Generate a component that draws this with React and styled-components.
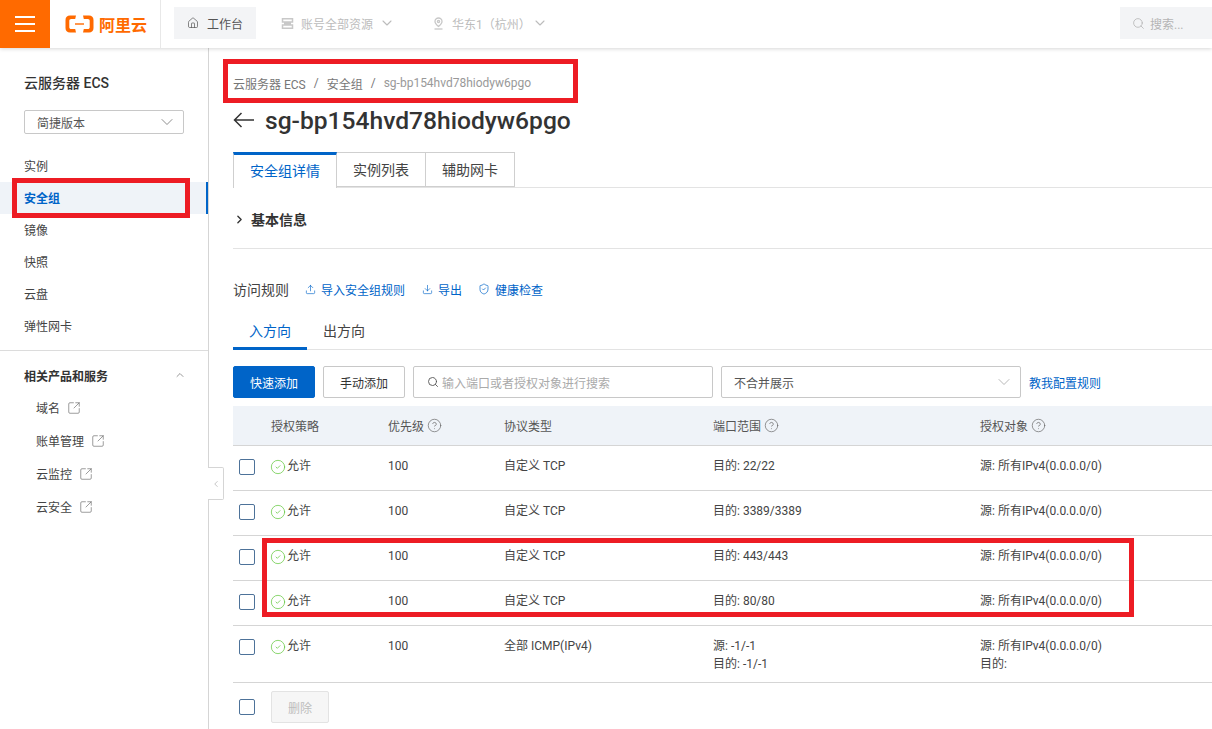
import React from 'react';
import styled, { createGlobalStyle } from 'styled-components';
import {
  ChevronDown, ChevronLeft, ChevronRight, ChevronUp, CircleCheck, CircleHelp,
  Download, House, Search, ShieldCheck, SquareArrowOutUpRight, Upload,
} from 'lucide-react';

const FONT = `Roboto, "Noto Sans CJK SC", sans-serif`;

const Global = createGlobalStyle`
  html, body { margin: 0; height: 100%; overflow: hidden; background: #fff; }
  body { font-family: ${FONT}; font-size: 12px; color: #333; }
  * { box-sizing: border-box; }
`;

/*──────── shells ─────*/
const Page = styled.div`
  display: flex; flex-direction: column;
  width: 1212px; height: 729px; overflow: hidden;
`;
const Body = styled.div`
  flex: 1; display: flex; min-height: 0;
`;

/* red annotation frame laid over the screenshot */
const Callout = styled.div`
  position: absolute;
  left: ${p => p.$left}px; top: ${p => p.$top}px;
  width: ${p => p.$w}px; height: ${p => p.$h}px;
  border: 5px solid #ed1c24;
  pointer-events: none;
  z-index: 5;
`;

/*──────── top bar ─────*/
const TopBar = styled.header`
  position: relative; z-index: 10;
  flex: 0 0 48px; display: flex; align-items: center;
  background: #fff;
  box-shadow: 0 1px 4px rgba(0, 0, 0, .16);
`;
const Burger = styled.button`
  flex: 0 0 50px; height: 48px; padding: 0 0 1px; border: 0;
  display: flex; flex-direction: column; justify-content: center; align-items: center; gap: 5px;
  background: #ff6a00;
  span { display: block; width: 20px; height: 2px; background: #fff; }
`;
const Logo = styled.div`
  flex: 0 0 111px; height: 48px;
  display: flex; align-items: center; gap: 5px;
  padding: 0 0 1px 15px;
  border-right: 1px solid #e8e8e8;
  color: #ff6a00; font-size: 16px; font-weight: 700;
`;
const WorkBtn = styled.div`
  display: flex; align-items: center; gap: 8px;
  width: 82px; height: 32px; margin: 0 0 2px 13px; padding-left: 13px;
  background: #f3f4f6; color: #555;
`;
const Scope = styled.div`
  display: flex; align-items: center;
  margin: 0 0 2px ${p => p.$ml}px;
  color: #bcbcbc;
  span { margin: 0 ${p => p.$gap}px 0 7px; }
`;
const TopSearch = styled.div`
  display: flex; align-items: center; gap: 5px;
  width: 92px; height: 32px; margin: 0 0 2px auto; padding-left: 12px;
  background: #f3f4f6; color: #b5b5b5;
`;

/*──────── side nav ─────*/
const Side = styled.aside`
  position: relative;
  flex: 0 0 209px;
  border-right: 1px solid #d5d5d5;
`;
const SideTitle = styled.div`
  margin: 25px 0 0 24px; height: 20px; line-height: 20px;
  font-size: 14px; font-weight: 500; color: #333;
`;
const VersionSelect = styled.div`
  display: flex; align-items: center; justify-content: space-between;
  width: 160px; height: 24px; margin: 17px 0 16px 24px; padding: 0 6px 0 12px;
  border: 1px solid #c8c8c8; border-radius: 2px; color: #555;
`;
const NavItem = styled.div`
  position: relative;
  height: 32px; line-height: 32px; padding: 1px 0 0 24px;
  color: ${p => (p.$active ? '#0064c8' : '#444')};
  font-weight: ${p => (p.$active ? 700 : 400)};
  background: ${p => (p.$active ? '#eff3f8' : 'transparent')};
  border-right: ${p => (p.$active ? '2px solid #0064c8' : '0')};
`;
const SideRule = styled.div`
  height: 1px; margin-top: 8px; background: #dcdcdc;
`;
const GroupHead = styled.div`
  display: flex; align-items: center; justify-content: space-between;
  height: 20px; margin-top: 14px; padding: 0 22px 0 24px;
  font-weight: 700; color: #333;
`;
const SubList = styled.div`
  margin-top: 6px;
`;
const SubItem = styled.div`
  display: flex; align-items: center; gap: 7px;
  height: 33px; padding-left: 36px; color: #444;
`;
const Handle = styled.div`
  position: absolute; left: 208px; top: 419px;
  display: flex; align-items: center; justify-content: center;
  width: 16px; height: 33px;
  background: #fff;
  border: 1px solid #d5d5d5; border-left: 0;
  border-radius: 0 2px 2px 0;
  color: #bbb;
`;

/*──────── main ─────*/
const Main = styled.main`
  flex: 1; min-width: 0; padding-left: 24px;
`;
const Crumbs = styled.nav`
  position: relative;
  display: flex; align-items: center; gap: 8px;
  height: 20px; margin-top: 25px;
  color: #777;
  em { font-style: normal; color: #999; }
`;
const TitleRow = styled.div`
  display: flex; align-items: center; gap: 11px;
  height: 36px; margin-top: 9px;
  color: #333; font-size: 24.6px; font-weight: 500;
`;
const Tabs = styled.div`
  display: flex;
  height: 36px; margin-top: 14px;
  border-bottom: 1px solid #e3e3e3;
`;
const Tab = styled.div`
  display: flex; align-items: center; justify-content: center;
  width: ${p => p.$w}px; height: ${p => (p.$active ? 36 : 35)}px;
  padding-bottom: ${p => (p.$active ? 3 : 1)}px;
  font-size: 14px;
  color: ${p => (p.$active ? '#0064c8' : '#444')};
  background: #fff;
  border: 1px solid #cfcfcf; border-left-width: ${p => (p.$first ? 1 : 0)}px;
  border-top: ${p => (p.$active ? '3px solid #0064c8' : '1px solid #cfcfcf')};
  border-bottom: ${p => (p.$active ? '0' : '1px solid #cfcfcf')};
`;
const Section = styled.div`
  display: flex; align-items: center; gap: 5px;
  height: 61px; padding-top: 2px;
  border-bottom: 1px solid #e3e3e3;
  font-size: 14px; font-weight: 700; color: #333;
`;
const RuleBar = styled.div`
  display: flex; align-items: center;
  height: 20px; margin-top: 30px;
  color: #444; font-size: 14px;
`;
const ActionLink = styled.a`
  display: flex; align-items: center; gap: 5px;
  margin-left: ${p => p.$ml}px;
  color: #0064c8; font-size: 12px;
`;
const DirTabs = styled.div`
  display: flex;
  height: 34px; margin-top: 17px;
  border-bottom: 1px solid #e3e3e3;
`;
const DirTab = styled.div`
  width: ${p => p.$w}px; height: 34px; line-height: 31px; text-align: center;
  font-size: 14px;
  color: ${p => (p.$active ? '#0064c8' : '#444')};
  border-bottom: ${p => (p.$active ? '3px solid #0064c8' : '0')};
`;
const Toolbar = styled.div`
  display: flex; align-items: center; gap: 8px;
  height: 32px; margin-top: 16px;
`;
const Btn = styled.button`
  width: 82px; height: 32px; padding: 0;
  font: 12px ${FONT};
  border-radius: 2px;
  color: ${p => (p.$primary ? '#fff' : '#333')};
  background: ${p => (p.$primary ? '#0064c8' : '#fff')};
  border: 1px solid ${p => (p.$primary ? '#0064c8' : '#c8c8c8')};
`;
const SearchBox = styled.div`
  display: flex; align-items: center; gap: 3px;
  width: 300px; height: 32px; padding-left: 13px;
  border: 1px solid #c8c8c8; border-radius: 2px;
  color: #aaa;
  svg { color: #555; }
`;
const MergeSelect = styled.div`
  display: flex; align-items: center; justify-content: space-between;
  width: 300px; height: 32px; padding: 0 6px 0 12px;
  border: 1px solid #c8c8c8; border-radius: 2px;
  color: #555;
  svg { color: #aaa; }
`;
const HelpLink = styled.a`
  color: #0064c8;
`;

/*──────── table ─────*/
const COLS = '38px 117px 116px 209px 267px 1fr';
const TableHead = styled.div`
  display: grid; grid-template-columns: ${COLS}; align-items: center;
  height: 40px; margin-top: 8px;
  background: #eff3f8;
  border-bottom: 1px solid #d5d5d5;
  color: #555;
`;
const HeadCell = styled.div`
  display: flex; align-items: center; gap: 3px;
  grid-column: ${p => p.$col};
  svg { color: #666; }
`;
const RowGroup = styled.div`
  position: relative;
`;
const Row = styled.div`
  display: grid; grid-template-columns: ${COLS}; align-items: start;
  height: ${p => p.$h || 45}px; padding-top: 11px;
  border-bottom: 1px solid #d5d5d5;
  line-height: 18px; color: #444;
`;
const Check = styled.span`
  display: block; width: 16px; height: 16px;
  margin: ${p => p.$mt ?? 2}px 0 0 6px;
  border: 1px solid #4d7299; border-radius: 2px;
  background: #fff;
`;
const Allow = styled.div`
  display: flex; align-items: center; gap: 1px;
  svg { color: #62c73c; margin: 2px 0 0 -1px; }
`;
const Footer = styled.div`
  display: flex; align-items: center; gap: 16px;
  height: 32px; margin-top: 8px;
`;
const DeleteBtn = styled.button`
  width: 58px; height: 32px; padding: 0;
  font: 12px ${FONT};
  color: #bdbdbd; background: #f6f6f6;
  border: 1px solid #e3e3e3; border-radius: 2px;
`;

/*──────── data ─────*/
const NAV = ['实例', '安全组', '镜像', '快照', '云盘', '弹性网卡'];
const SUB = ['域名', '账单管理', '云监控', '云安全'];
const HEAD = [
  ['授权策略', false], ['优先级', true], ['协议类型', false], ['端口范围', true], ['授权对象', true],
];
const SRC_ALL = '源: 所有IPv4(0.0.0.0/0)';

const LogoMark = () => (
  <svg width="29" height="18" viewBox="0 0 29 18" fill="#ff6a00">
    <path d="M11 0.500H5C2.200 0.500 0.500 2.200 0.500 5v8c0 2.800 1.700 4.500 4.500 4.500h6l-0.800-3.500H6.200C5 14 4.300 13.300 4.300 12.200V5.800C4.300 4.700 5 4 6.200 4h4z" />
    <path d="M18 0.500h6c2.800 0 4.500 1.700 4.500 4.500v8c0 2.800-1.700 4.500-4.500 4.500h-6l0.800-3.500h4c1.200 0 1.900-0.700 1.900-1.800V5.800c0-1.100-0.700-1.800-1.900-1.800h-4z" />
    <rect x="10" y="8.300" width="9" height="1.400" />
  </svg>
);

const AccountIcon = () => (
  <svg width="13" height="13" viewBox="0 0 13 13" fill="none" stroke="#c8c8c8" strokeWidth="1.500">
    <path d="M1.500 1.800h10v3.200h-10zM3 6.500h7M1.500 8h10v3.200h-10z" />
  </svg>
);

const PinIcon = () => (
  <svg width="13" height="13" viewBox="0 0 13 13" fill="none" stroke="#c8c8c8" strokeWidth="1.300">
    <path d="M6.500 9.500C4.500 7.800 3 6.300 3 4.500a3.500 3.500 0 0 1 7 0C10 6.300 8.500 7.800 6.500 9.500z" />
    <circle cx="6.500" cy="4.500" r="1.100" />
    <path d="M2.500 12h8" />
  </svg>
);

const BackArrow = () => (
  <svg width="21" height="16" viewBox="0 0 21 16" fill="none" stroke="#333" strokeWidth="1.500">
    <path d="M21 8H1.500M8.500 1l-7 7 7 7" />
  </svg>
);

function DataRow({ proto = '自定义 TCP', port, src = SRC_ALL, extra, h }) {
  return (
    <Row $h={h}>
      <Check />
      <Allow><CircleCheck size={16} strokeWidth={1.1} />允许</Allow>
      <div>100</div>
      <div>{proto}</div>
      <div>{port}{extra && <><br />{extra}</>}</div>
      <div>{src}{extra && <><br />目的:</>}</div>
    </Row>
  );
}

export default function App() {
  return (
    <Page>
      <Global />
      <TopBar>
        <Burger aria-label="menu"><span /><span /><span /></Burger>
        <Logo><LogoMark />阿里云</Logo>
        <WorkBtn><House size={12} strokeWidth={1.4} />工作台</WorkBtn>
        <Scope $ml={25} $gap={6}>
          <AccountIcon /><span>账号全部资源</span><ChevronDown size={16} strokeWidth={1.6} />
        </Scope>
        <Scope $ml={37} $gap={1}>
          <PinIcon /><span>华东1（杭州）</span><ChevronDown size={16} strokeWidth={1.6} />
        </Scope>
        <TopSearch><Search size={13} strokeWidth={1.5} />搜索...</TopSearch>
      </TopBar>

      <Body>
        <Side>
          <SideTitle>云服务器 ECS</SideTitle>
          <VersionSelect>简捷版本<ChevronDown size={20} strokeWidth={1} color="#777" /></VersionSelect>
          {NAV.map(n => (
            <NavItem key={n} $active={n === '安全组'}>
              {n}
              {n === '安全组' && <Callout $left={12} $top={-4} $w={178} $h={40} />}
            </NavItem>
          ))}
          <SideRule />
          <GroupHead>相关产品和服务<ChevronUp size={12} color="#999" /></GroupHead>
          <SubList>
            {SUB.map(s => (
              <SubItem key={s}>{s}<SquareArrowOutUpRight size={14} strokeWidth={1.1} color="#666" /></SubItem>
            ))}
          </SubList>
          <Handle><ChevronLeft size={10} /></Handle>
        </Side>

        <Main>
          <Crumbs>
            <span>云服务器 ECS</span><span>/</span><span>安全组</span><span>/</span><em>sg-bp154hvd78hiodyw6pgo</em>
            <Callout $left={-10} $top={-14} $w={355} $h={44} />
          </Crumbs>
          <TitleRow><BackArrow />sg-bp154hvd78hiodyw6pgo</TitleRow>

          <Tabs>
            <Tab $w={104} $first $active>安全组详情</Tab>
            <Tab $w={89}>实例列表</Tab>
            <Tab $w={89}>辅助网卡</Tab>
          </Tabs>
          <Section><ChevronRight size={13} strokeWidth={2.5} />基本信息</Section>

          <RuleBar>
            访问规则
            <ActionLink $ml={16}><Upload size={11} strokeWidth={1.4} />导入安全组规则</ActionLink>
            <ActionLink $ml={17}><Download size={11} strokeWidth={1.4} />导出</ActionLink>
            <ActionLink $ml={16}><ShieldCheck size={12} strokeWidth={1.4} />健康检查</ActionLink>
          </RuleBar>

          <DirTabs>
            <DirTab $w={74} $active>入方向</DirTab>
            <DirTab $w={74}>出方向</DirTab>
          </DirTabs>

          <Toolbar>
            <Btn $primary>快速添加</Btn>
            <Btn>手动添加</Btn>
            <SearchBox><Search size={12} strokeWidth={1.8} />输入端口或者授权对象进行搜索</SearchBox>
            <MergeSelect>不合并展示<ChevronDown size={20} strokeWidth={1} /></MergeSelect>
            <HelpLink>教我配置规则</HelpLink>
          </Toolbar>

          <TableHead>
            {HEAD.map(([label, help], i) => (
              <HeadCell key={label} $col={i + 2}>
                {label}{help && <CircleHelp size={15} strokeWidth={1.1} />}
              </HeadCell>
            ))}
          </TableHead>
          <DataRow port="目的: 22/22" />
          <DataRow port="目的: 3389/3389" />
          <RowGroup>
            <DataRow port="目的: 443/443" />
            <DataRow port="目的: 80/80" />
            <Callout $left={29} $top={2} $w={872} $h={79} />
          </RowGroup>
          <DataRow h={57} proto="全部 ICMP(IPv4)" port="源: -1/-1" extra="目的: -1/-1" />
          <Footer>
            <Check $mt={0} />
            <DeleteBtn disabled>删除</DeleteBtn>
          </Footer>
        </Main>
      </Body>
    </Page>
  );
}
